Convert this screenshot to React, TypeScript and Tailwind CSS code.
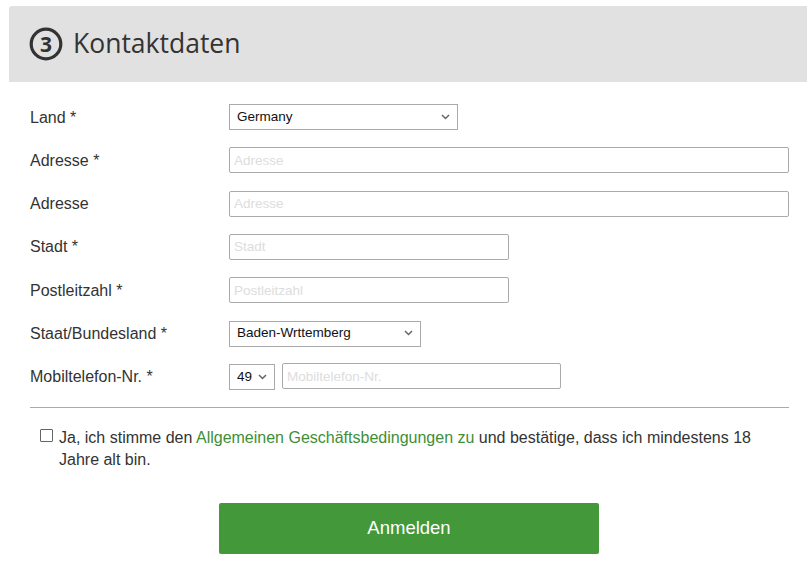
import React from "react";

const labelCls = "w-[199px] shrink-0 text-[16px] text-[#333] pt-[1px]";
const inputCls =
  "h-[26px] border border-[#aaa] rounded-[2px] bg-white px-[4px] text-[13.5px] text-[#222] placeholder:text-[#ddd] outline-none";

function Chevron() {
  return (
    <svg
      className="pointer-events-none absolute right-[8px] top-1/2 -translate-y-1/2"
      width="9"
      height="6"
      viewBox="0 0 9 6"
      fill="none"
    >
      <path d="M1 1l3.5 3.5L8 1" stroke="#666" strokeWidth="1.5" />
    </svg>
  );
}

function Select({ value, width, options }: { value: string; width: string; options: string[] }) {
  return (
    <div className={`relative h-[26px] ${width}`}>
      <select
        defaultValue={value}
        className="h-full w-full appearance-none border border-[#aaa] bg-white pl-[7px] text-[13.5px] text-[#111] outline-none"
      >
        {options.map((o) => (
          <option key={o}>{o}</option>
        ))}
      </select>
      <Chevron />
    </div>
  );
}

function Row({ label, children }: { label: string; children: React.ReactNode }) {
  return (
    <div className="flex items-center h-[26px]">
      <span className={labelCls}>{label}</span>
      <div className="flex-1 flex items-center">{children}</div>
    </div>
  );
}

export default function App() {
  return (
    <div className="w-[807px] h-[563px] bg-white overflow-hidden font-['Liberation_Sans',Arial,sans-serif]">
      <div className="pt-[6px] pl-[9px]">
        <div className="h-[76px] bg-[#e1e1e1] rounded-tl-[3px] flex items-center pl-[20px] gap-[10px]">
          <div className="relative w-[34px] h-[34px] flex items-center justify-center">
            <svg className="absolute inset-0" width="34" height="34" viewBox="0 0 34 34">
              <circle cx="17" cy="17" r="14.8" fill="none" stroke="#333" strokeWidth="3.2" />
            </svg>
            <span className="relative font-['Open_Sans',sans-serif] font-bold text-[21px] leading-none text-[#333]">
              3
            </span>
          </div>
          <h2 className="font-['Open_Sans',sans-serif] text-[26.5px] text-[#333] leading-none pb-[2px]">
            Kontaktdaten
          </h2>
        </div>
      </div>

      <div className="pl-[30px] pr-[18px]">
        <div className="mt-[22px] flex flex-col gap-[17.3px]">
          <Row label="Land *">
            <Select value="Germany" width="w-[229px]" options={["Germany", "Austria", "Switzerland"]} />
          </Row>
          <Row label="Adresse *">
            <input className={`${inputCls} w-full`} placeholder="Adresse" />
          </Row>
          <Row label="Adresse">
            <input className={`${inputCls} w-full`} placeholder="Adresse" />
          </Row>
          <Row label="Stadt *">
            <input className={`${inputCls} w-[280px]`} placeholder="Stadt" />
          </Row>
          <Row label="Postleitzahl *">
            <input className={`${inputCls} w-[280px]`} placeholder="Postleitzahl" />
          </Row>
          <Row label="Staat/Bundesland *">
            <Select value="Baden-Wrttemberg" width="w-[192px]" options={["Baden-Wrttemberg", "Bayern", "Berlin"]} />
          </Row>
          <Row label="Mobiltelefon-Nr. *">
            <Select value="49" width="w-[46px]" options={["49", "43", "41"]} />
            <input className={`${inputCls} w-[279px] ml-[7px] -mt-[1px]`} placeholder="Mobiltelefon-Nr." />
          </Row>
        </div>

        <div className="mt-[17px] border-t border-[#aaa]" />

        <div className="mt-[20px] flex items-start">
          <input
            type="checkbox"
            className="mt-[1px] ml-[10px] w-[13px] h-[13px] shrink-0 appearance-none border border-[#666] bg-white rounded-[1px]"
          />
          <p className="ml-[6px] text-[16px] leading-[22px] text-[#333] -mt-[1px]">
            <span>Ja, ich stimme den </span>
            <a href="#" className="text-[#3e8e37]">
              Allgemeinen Geschäftsbedingungen zu
            </a>
            <span> und bestätige, dass ich mindestens 18</span> <span>Jahre alt bin.</span>
          </p>
        </div>

        <div className="mt-[32px] flex justify-center pr-[1px]">
          <button className="w-[380px] h-[51px] bg-[#43983a] rounded-[2px] text-white text-[18.5px]">
            Anmelden
          </button>
        </div>
      </div>
    </div>
  );
}
